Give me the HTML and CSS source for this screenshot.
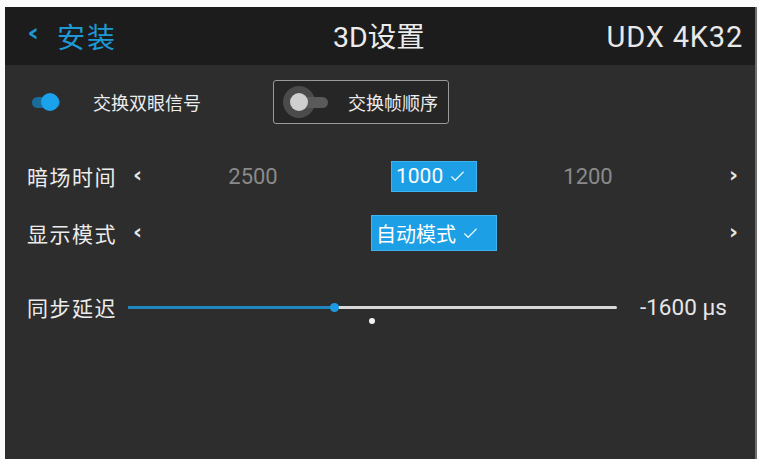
FILE: index.html
```html
<!DOCTYPE html>
<html lang="zh">
<head>
<meta charset="utf-8">
<link rel="stylesheet" href="styles.css">
</head>
<body>
<div class="screen">
  <header class="topbar">
    <div class="back"><span class="chev">‹</span><span class="back-text">安装</span></div>
    <div class="title">3D设置</div>
    <div class="model">UDX 4K32</div>
  </header>
  <main class="content">
    <div class="row toggles">
      <div class="switch on"><span class="track"></span><span class="knob"></span></div>
      <span class="toggle-label">交换双眼信号</span>
      <div class="btn-toggle">
        <div class="switch off"><span class="halo"></span><span class="track"></span><span class="knob"></span></div>
        <span class="toggle-label">交换帧顺序</span>
      </div>
    </div>
    <div class="row select-row r-dark">
      <span class="label">暗场时间</span>
      <span class="arrow left">‹</span>
      <div class="values">
        <span class="val c1">2500</span>
        <span class="val c2"><span class="chip small">1000<svg class="check" viewBox="0 0 16 12"><path d="M1.5 6.5 L5.5 10.5 L14.5 1.5" /></svg></span></span>
        <span class="val c3">1200</span>
      </div>
      <span class="arrow right">›</span>
    </div>
    <div class="row select-row r-mode">
      <span class="label">显示模式</span>
      <span class="arrow left">‹</span>
      <div class="values">
        <span class="val c1"></span>
        <span class="val c2"><span class="chip big">自动模式<svg class="check" viewBox="0 0 16 12"><path d="M1.5 6.5 L5.5 10.5 L14.5 1.5" /></svg></span></span>
        <span class="val c3"></span>
      </div>
      <span class="arrow right">›</span>
    </div>
    <div class="row slider-row">
      <span class="label">同步延迟</span>
      <div class="slider">
        <span class="fill"></span>
        <span class="thumb"></span>
        <span class="rest"></span>
        <span class="marker"></span>
      </div>
      <span class="slider-val">-1600 µs</span>
    </div>
  </main>
</div>
</body>
</html>
```
FILE: styles.css
```css
* { box-sizing: border-box; }
html, body { margin: 0; padding: 0; }
body {
  background: #fbfbfb;
  width: 759px;
  height: 459px;
  overflow: hidden;
  font-family: "Noto Sans CJK SC", Roboto, sans-serif;
}
.screen {
  margin: 7px 0 0 5px;
  width: 752px;
  height: 452px;
  background: #2d2d2d;
  border-right: 2px solid #6e6e6e;
  display: flex;
  flex-direction: column;
}
.topbar {
  height: 58px;
  background: #1c1c1c;
  display: flex;
  align-items: center;
  position: relative;
  padding: 0 10px 0 22px;
}
.back {
  display: flex;
  align-items: center;
  color: #1d9ad6;
}
.chev {
  font-family: "DejaVu Sans", sans-serif;
  font-size: 30px;
  line-height: 1;
  margin-top: -6px;
  width: 30px;
  transform: scaleY(0.8);
  font-weight: bold;
}
.back-text {
  font-size: 28px;
  letter-spacing: 2px;
  line-height: 1;
}
.title {
  position: absolute;
  left: 328px;
  top: 17px;
  font-size: 28.5px;
  color: #ececec;
  line-height: 1;
  font-family: Roboto, "Noto Sans CJK SC", sans-serif;
}
.model {
  margin-left: auto;
  font-family: Roboto, sans-serif;
  font-size: 29px;
  color: #e8e8e8;
  letter-spacing: 0.8px;
  margin-right: 2px;
  margin-top: 2px;
}
.content {
  flex: 1;
  padding-left: 22px;
  display: flex;
  flex-direction: column;
  color: #e6e6e6;
}
.row { display: flex; align-items: center; }
.toggles {
  margin-top: 15px;
  height: 44px;
}
.switch {
  position: relative;
  width: 36px;
  height: 22px;
}
.switch .track {
  position: absolute;
  left: 5px;
  top: 6px;
  width: 28px;
  height: 11px;
  border-radius: 6px;
}
.switch .knob {
  position: absolute;
  top: 2px;
  width: 18px;
  height: 18px;
  border-radius: 50%;
}
.switch.on .track { background: #1a6c9b; }
.switch.on .knob { left: 14px; background: #1aa3ec; }
.switch.off .track { left: 8px; width: 32px; background: #5a5a5a; }
.switch.off .knob { left: 2px; background: #cfcfcf; }
.switch.off .halo {
  position: absolute;
  left: -5px;
  top: -5px;
  width: 32px;
  height: 32px;
  border-radius: 50%;
  background: #4b4b4b;
}
.toggle-label {
  font-size: 18px;
  margin-left: 30px;
  color: #ececec;
}
.btn-toggle {
  margin-left: 72px;
  width: 176px;
  height: 44px;
  border: 1.5px solid #9a9a9a;
  border-radius: 3px;
  display: flex;
  align-items: center;
  padding-left: 14px;
  background: #262626;
}
.btn-toggle .toggle-label { margin-left: 24px; }
.select-row { height: 36px; }
.r-dark { margin-top: 34px; }
.r-mode { margin-top: 21px; }
.label {
  font-size: 21px;
  width: 104px;
  color: #ececec;
  letter-spacing: 1.5px;
}
.arrow {
  font-family: "DejaVu Sans", sans-serif;
  font-weight: bold;
  font-size: 22px;
  color: #e6e6e6;
  margin-top: -4px;
}
.arrow.left { width: 21px; padding-left: 2px; }
.values { display: flex; align-items: center; }
.val {
  font-family: Roboto, sans-serif;
  font-size: 22px;
  color: #8a8a8a;
  text-align: center;
  display: flex;
  justify-content: center;
}
.c1 { width: 202px; }
.c2 { width: 160px; }
.c3 { width: 148px; }
.chip {
  background: #1c9fe4;
  color: #fff;
  display: inline-flex;
  align-items: center;
  padding: 0 4px;
  border: 1px solid #3db4f0;
}
.chip.small { height: 31px; width: 86px; font-size: 21px; }
.chip.big { height: 36px; width: 126px; font-size: 20px; font-family: "Noto Sans CJK SC", sans-serif; }
.check {
  width: 15px;
  height: 12px;
  margin-left: 7px;
  fill: none;
  stroke: #e4f4ff;
  stroke-width: 1.4;
}
.arrow.right { margin-left: 67px; }
.slider-row {
  margin-top: 41px;
  height: 30px;
}
.slider-row .label { width: 101px; }
.slider {
  position: relative;
  width: 489px;
  height: 30px;
}
.slider .fill {
  position: absolute;
  left: 0;
  top: 14px;
  width: 207px;
  height: 3px;
  background: #1f86c0;
}
.slider .rest {
  position: absolute;
  left: 207px;
  top: 14px;
  width: 282px;
  height: 3px;
  background: #d8d8d8;
  border-radius: 2px;
}
.slider .thumb {
  position: absolute;
  left: 202px;
  top: 11px;
  width: 9px;
  height: 9px;
  border-radius: 50%;
  background: #1e9be0;
  z-index: 1;
}
.slider .marker {
  position: absolute;
  left: 241px;
  top: 26px;
  width: 6px;
  height: 6px;
  border-radius: 50%;
  background: #f2f2f2;
}
.slider-val {
  margin-left: 23px;
  font-family: Roboto, sans-serif;
  font-size: 22.5px;
  color: #e6e6e6;
}
```
